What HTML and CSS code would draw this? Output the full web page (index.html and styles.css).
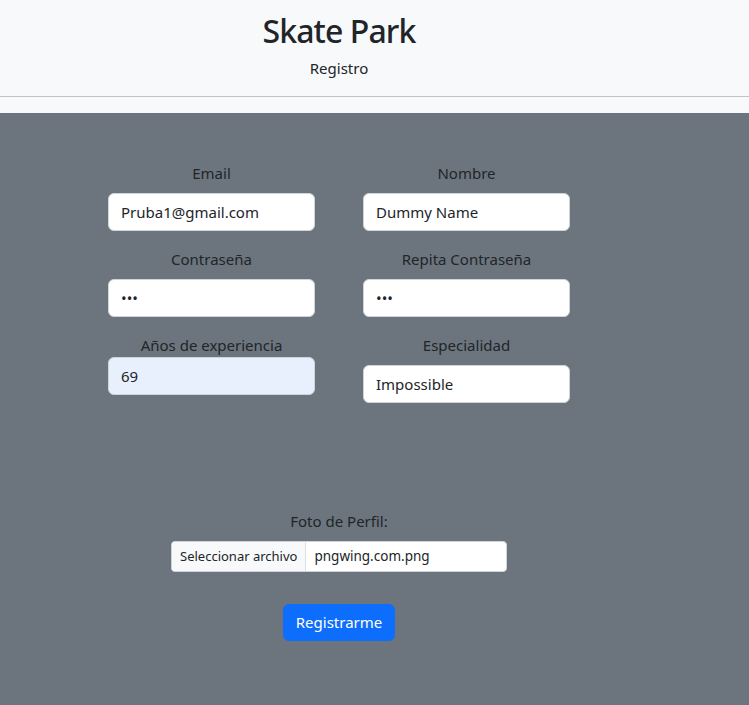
FILE: index.html
```html
<!DOCTYPE html>
<html lang="es">
<head>
<meta charset="utf-8">
<title>Skate Park</title>
<link rel="stylesheet" href="styles.css">
</head>
<body>
<div class="page">
  <header class="header">
    <h1 class="title">Skate Park</h1>
    <p class="subtitle">Registro</p>
    <hr class="rule">
  </header>
  <main class="main">
    <form class="form">
      <div class="grid">
        <div class="field">
          <label class="label">Email</label>
          <input class="control" type="text" value="Pruba1@gmail.com">
        </div>
        <div class="field">
          <label class="label">Nombre</label>
          <input class="control" type="text" value="Dummy Name">
        </div>
        <div class="field">
          <label class="label">Contraseña</label>
          <input class="control" type="password" value="123">
        </div>
        <div class="field">
          <label class="label">Repita Contraseña</label>
          <input class="control" type="password" value="123">
        </div>
        <div class="field">
          <label class="label label-tight">Años de experiencia</label>
          <input class="control control-filled" type="text" value="69">
        </div>
        <div class="field">
          <label class="label">Especialidad</label>
          <input class="control" type="text" value="Impossible">
        </div>
      </div>
      <div class="photo">
        <label class="label">Foto de Perfil:</label>
        <div class="file">
          <span class="file-btn">Seleccionar archivo</span>
          <span class="file-name">pngwing.com.png</span>
        </div>
      </div>
      <div class="actions">
        <button class="btn" type="button">Registrarme</button>
      </div>
    </form>
  </main>
</div>
</body>
</html>
```

FILE: styles.css
```css
* { box-sizing: border-box; }
html, body { margin: 0; padding: 0; height: 100%; }
body {
  font-family: "Noto Sans", "Open Sans", sans-serif;
  font-size: 15px;
  line-height: 1.5;
  color: #212529;
  background: #6c757d;
}
.page { display: flex; flex-direction: column; min-height: 100%; }
.header {
  background: #f8f9fa;
  width: 100%;
  padding-top: 11px;
}
.title {
  width: 678px;
  margin: 0;
  text-align: center;
  font-size: 32px;
  font-weight: 500;
  letter-spacing: -0.9px;
  line-height: 40px;
}
.subtitle {
  width: 678px;
  margin: 5px 0 0;
  text-align: center;
  line-height: 24px;
}
.rule {
  margin: 16px 0 0;
  border: 0;
  border-top: 1px solid #c2c3c4;
  height: 0;
  padding-bottom: 16px;
}
.main { flex: 1; padding-top: 48px; }
.form { width: 678px; }
.grid {
  display: grid;
  grid-template-columns: 207px 207px;
  column-gap: 48px;
  row-gap: 16px;
  justify-content: center;
}
.field { display: flex; flex-direction: column; }
.label {
  display: block;
  text-align: center;
  line-height: 24px;
  margin-bottom: 8px;
  color: #212529;
}
.label-tight { margin-bottom: 0; }
.control {
  display: block;
  width: 100%;
  height: 38px;
  padding: 6px 12px;
  font: inherit;
  color: #212529;
  background: #fff;
  border: 1px solid #ced4da;
  border-radius: 6px;
  outline: none;
}
.control-filled { background: #e8f0fe; }
.photo {
  margin-top: 106px;
  display: flex;
  flex-direction: column;
  align-items: center;
}
.file {
  display: flex;
  width: 336px;
  height: 31px;
  font-size: 13px;
  line-height: 29px;
  background: #fff;
  border: 1px solid #ced4da;
  border-radius: 4px;
  overflow: hidden;
}
.file-btn {
  padding: 0 8px;
  background: #f8f9fa;
  border-right: 1px solid #dee2e6;
}
.file-name { padding: 0 8px; font-size: 13.5px; }
.actions {
  margin-top: 32px;
  display: flex;
  justify-content: center;
}
.btn {
  height: 37px;
  padding: 0 12px;
  font: inherit;
  color: #fff;
  background: #0d6efd;
  border: 1px solid #0d6efd;
  border-radius: 6px;
}
```
